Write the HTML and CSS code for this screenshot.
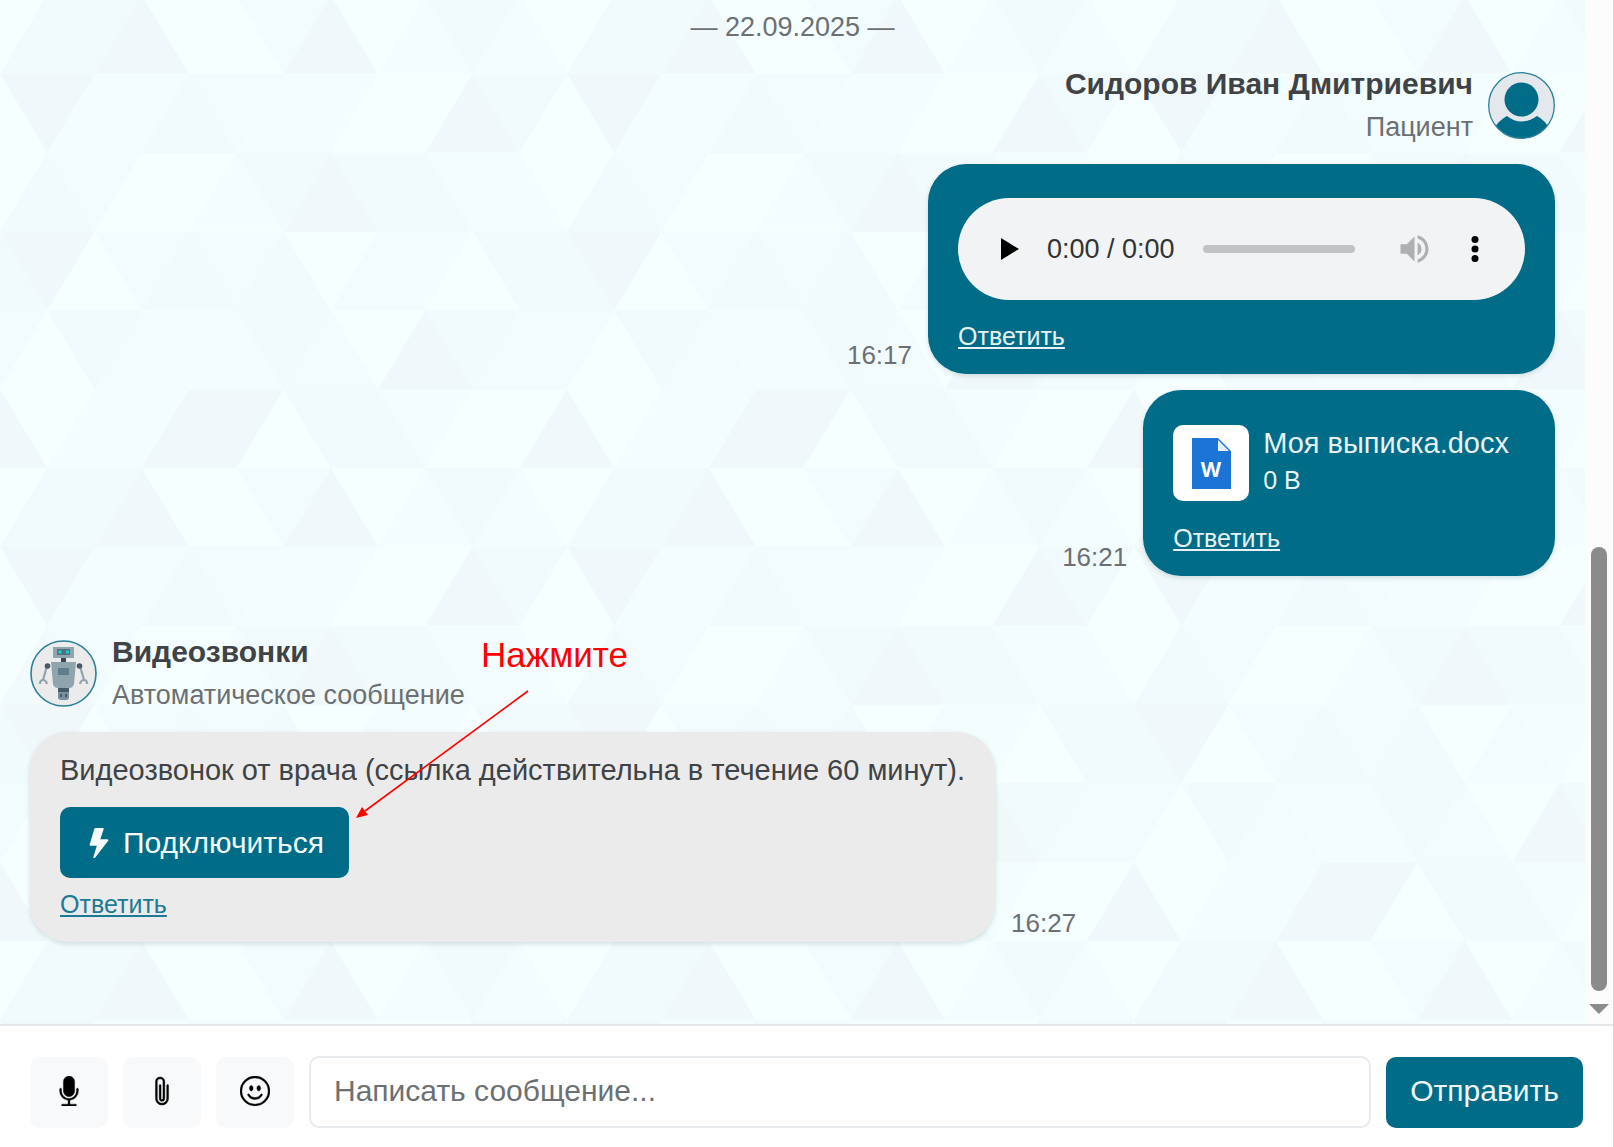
FILE: index.html
```html
<!DOCTYPE html>
<html lang="ru">
<head>
<meta charset="utf-8">
<meta name="viewport" content="width=device-width, initial-scale=1">
<title>Чат с врачом</title>
<link rel="stylesheet" href="styles.css">
</head>
<body>
<div class="app">
  <div class="viewport">
    <main class="chat">
      <svg class="chat-pattern" aria-hidden="true">
        <defs>
          <pattern id="triangles" patternUnits="userSpaceOnUse" y="-5" width="567" height="473" viewBox="0 0 12 6" preserveAspectRatio="none">
            <path class="shade-1" d="M8 1h2l-1-1zM10 1h2l-1-1zM1 2h2l-1-1zM2 1h2l-1 1zM5 2h2l-1-1zM6 1h2l-1 1zM4 3h2l-1-1zM9 2h2l-1 1zM10 3h2l-1-1zM8 3h2l-1 1zM3 4h2l-1 1zM4 5h2l-1-1zM1 6h2l-1-1zM2 5h2l-1 1zM8 5h2l-1 1z"/>
            <path class="shade-2" d="M5 0h2l-1 1zM4 1h2l-1 1zM1 2h2l-1 1zM2 3h2l-1 1zM4 3h2l-1 1zM7 4h2l-1-1zM2 5h2l-1-1zM6 5h2l-1-1zM10 5h2l-1-1zM11 4h2l-1 1zM-1 4h2l-1 1z"/>
            <path class="shade-3" d="M0 1h2l-1-1zM1 0h2l-1 1zM9 0h2l-1 1zM3 2h2l-1-1zM10 1h2l-1 1zM0 3h2l-1-1zM5 2h2l-1 1zM7 2h2l-1 1zM8 3h2l-1-1zM3 4h2l-1-1zM5 4h2l-1-1zM10 3h2l-1 1zM11 4h2l-1-1zM-1 4h2l-1-1zM1 4h2l-1 1zM5 4h2l-1 1zM9 4h2l-1 1zM6 5h2l-1 1zM7 6h2l-1-1z"/>
            <path class="shade-4" d="M2 1h2l-1-1zM6 1h2l-1-1zM0 1h2l-1 1zM9 2h2l-1-1zM6 3h2l-1-1zM0 3h2l-1 1zM8 5h2l-1-1zM3 6h2l-1-1zM4 5h2l-1 1zM11 6h2l-1-1zM-1 6h2l-1-1z"/>
          </pattern>
        </defs>
        <rect width="100%" height="100%" fill="url(#triangles)"/>
      </svg>

      <p class="date">— 22.09.2025 —</p>

      <section class="group group-own">
        <header class="author">
          <div class="author-text">
            <h2 class="author-name">Сидоров Иван Дмитриевич</h2>
            <p class="author-role">Пациент</p>
          </div>
          <svg class="avatar" viewBox="0 0 67 67" aria-hidden="true">
            <defs><clipPath id="avatar-clip"><circle cx="33.500" cy="33.500" r="33"/></clipPath></defs>
            <circle cx="33.500" cy="33.500" r="33" fill="#e4e7ec"/>
            <path clip-path="url(#avatar-clip)" d="M5 58Q11 48 19 44q14 11 30 0Q57 48 62 58L50 70H17z" fill="#006c88"/>
            <circle cx="33.500" cy="27.500" r="17" fill="#006c88"/>
            <circle cx="33.500" cy="33.500" r="32.800" fill="none" stroke="#2b8199" stroke-width="1.300"/>
          </svg>
        </header>

        <article class="message">
          <time class="time">16:17</time>
          <div class="bubble">
            <div class="player">
              <button class="player-button" type="button" aria-label="Воспроизвести">
                <svg class="icon-play" viewBox="0 0 18 22"><path d="M0 0v22l18-11z"/></svg>
              </button>
              <span class="player-time">0:00 / 0:00</span>
              <input class="player-seek" type="range" min="0" max="100" value="0" aria-label="Перемотка" disabled>
              <button class="player-button player-volume" type="button" aria-label="Звук" disabled>
                <svg class="icon-volume" viewBox="3 3 18 18"><path d="M3 9v6h4l5 5V4L7 9H3zm13.500 3A4.500 4.500 0 0 0 14 7.970v8.050A4.470 4.470 0 0 0 16.500 12zM14 3.230v2.060c2.890.860 5 3.540 5 6.710s-2.110 5.850-5 6.710v2.060c4.010-.910 7-4.490 7-8.770s-2.990-7.860-7-8.770z"/></svg>
              </button>
              <button class="player-button" type="button" aria-label="Ещё">
                <svg class="icon-more" viewBox="0 0 8 28"><circle cx="4" cy="4.500" r="3.500"/><circle cx="4" cy="14" r="3.500"/><circle cx="4" cy="23.500" r="3.500"/></svg>
              </button>
            </div>
            <a class="reply" href="#">Ответить</a>
          </div>
        </article>

        <article class="message">
          <time class="time">16:21</time>
          <div class="bubble">
            <div class="file">
              <span class="file-icon">
                <svg viewBox="0 0 39 51" aria-hidden="true">
                  <path d="M0 0h26l13 13v38H0z" fill="#1b74d6"/>
                  <path d="M26 2v11h11z" fill="#e4f0fb"/>
                  <text x="19" y="39" text-anchor="middle" class="file-letter">W</text>
                </svg>
              </span>
              <div class="file-text">
                <p class="file-name">Моя выписка.docx</p>
                <p class="file-size">0 B</p>
              </div>
            </div>
            <a class="reply" href="#">Ответить</a>
          </div>
        </article>
      </section>

      <section class="group group-bot">
        <header class="author">
          <svg class="avatar" viewBox="0 0 67 67" aria-hidden="true">
            <circle cx="33.500" cy="33.500" r="32.500" fill="#ebebeb" stroke="#2b8199" stroke-width="1.600"/>
            <path d="M31 17h5v5h-5z" fill="#37474f"/>
            <rect x="23" y="7" width="21" height="11" fill="#90a4ae"/>
            <rect x="27" y="9" width="13" height="6" fill="#546e7a"/>
            <circle cx="30" cy="12" r="1.800" fill="#18d3d3"/><circle cx="37.500" cy="12" r="1.800" fill="#18d3d3"/>
            <path d="M17 26 13 40M50 26l4 14M10 44q0-4 3-4 3 0 4 4M50 44q1-4 4-4 3 0 3 4" fill="none" stroke="#90a4ae" stroke-width="2.200"/>
            <path d="M21 22h25l-2 22q-1 4-5 4H28q-4 0-5-4z" fill="#90a4ae"/>
            <rect x="28" y="28" width="11" height="7" fill="#607d8b"/>
            <circle cx="17.500" cy="26" r="2.800" fill="#455a64"/><circle cx="49.500" cy="26" r="2.800" fill="#455a64"/>
            <path d="M28 48h11v9q0 3-3 3h-5q-3 0-3-3z" fill="#78909c"/>
            <path d="M28 48h11v4H28z" fill="#455a64"/><path d="M30 54h2v3h-2zm5 0h2v3h-2z" fill="#455a64"/>
          </svg>
          <div class="author-text">
            <h2 class="author-name">Видеозвонки</h2>
            <p class="author-role">Автоматическое сообщение</p>
          </div>
        </header>

        <article class="message">
          <div class="bubble bubble-bot">
            <p class="bubble-text">Видеозвонок от врача (ссылка действительна в течение 60 минут).</p>
            <button class="connect" type="button">
              <svg class="icon" viewBox="0 0 16 16" aria-hidden="true"><path d="M5.520.359A.5.500 0 0 1 6 0h4a.5.500 0 0 1 .474.658L8.694 6H12.500a.5.500 0 0 1 .395.807l-7 9a.5.500 0 0 1-.873-.454L6.823 9.500H3.500a.5.500 0 0 1-.480-.641z"/></svg>
              Подключиться
            </button>
            <a class="reply" href="#">Ответить</a>
          </div>
          <time class="time">16:27</time>
        </article>

        <div class="hint">
          <p class="hint-text">Нажмите</p>
          <svg class="hint-arrow" viewBox="0 0 174 130" aria-hidden="true">
            <path d="M173 1 10 121" stroke="#f00" stroke-width="1.600"/>
            <path d="M1 128 7 117l6 8z" fill="#f00"/>
          </svg>
        </div>
      </section>
    </main>

    <div class="scrollbar" aria-hidden="true">
      <div class="scrollbar-thumb"></div>
      <div class="scrollbar-arrow"></div>
    </div>
  </div>

  <form class="composer">
    <button class="tool" type="button" aria-label="Голосовое сообщение">
      <svg class="icon" viewBox="0 0 16 16"><path d="M5 3a3 3 0 0 1 6 0v5a3 3 0 0 1-6 0z"/><path d="M3.500 6.500A.5.500 0 0 1 4 7v1a4 4 0 0 0 8 0V7a.5.500 0 0 1 1 0v1a5 5 0 0 1-4.500 4.975V15h3a.5.500 0 0 1 0 1h-7a.5.500 0 0 1 0-1h3v-2.025A5 5 0 0 1 3 8V7a.5.500 0 0 1 .5-.5"/></svg>
    </button>
    <button class="tool" type="button" aria-label="Прикрепить файл">
      <svg class="icon" viewBox="0 0 16 16"><path d="M4.500 3a2.500 2.500 0 0 1 5 0v9a1.500 1.500 0 0 1-3 0V5a.5.500 0 0 1 1 0v7a.5.500 0 0 0 1 0V3a1.500 1.500 0 1 0-3 0v9a2.500 2.500 0 0 0 5 0V5a.5.500 0 0 1 1 0v7a3.500 3.500 0 1 1-7 0z"/></svg>
    </button>
    <button class="tool" type="button" aria-label="Эмодзи">
      <svg class="icon" viewBox="0 0 16 16"><path d="M8 15A7 7 0 1 1 8 1a7 7 0 0 1 0 14m0 1A8 8 0 1 0 8 0a8 8 0 0 0 0 16"/><path d="M4.285 9.567a.5.500 0 0 1 .683.183A3.500 3.500 0 0 0 8 11.500a3.500 3.500 0 0 0 3.032-1.750.5.500 0 1 1 .866.500A4.500 4.500 0 0 1 8 12.500a4.500 4.500 0 0 1-3.898-2.250.5.500 0 0 1 .183-.683M7 6.500C7 7.328 6.552 8 6 8s-1-.672-1-1.500S5.448 5 6 5s1 .672 1 1.500m4 0c0 .828-.448 1.500-1 1.500s-1-.672-1-1.500S9.448 5 10 5s1 .672 1 1.500"/></svg>
    </button>
    <input class="field" type="text" placeholder="Написать сообщение..." aria-label="Написать сообщение">
    <button class="send" type="submit">Отправить</button>
  </form>
</div>
</body>
</html>
```
FILE: styles.css
```css
* {
  box-sizing: border-box;
}

body {
  margin: 0;
  color: #3f4346;
  font-family: "Liberation Sans", Arial, sans-serif;
  font-size: 30px;
}

h2,
p {
  margin: 0;
}

button,
input {
  margin: 0;
  border: 0;
  padding: 0;
  font: inherit;
}

svg {
  display: block;
}

.app {
  display: flex;
  flex-direction: column;
  min-height: 100vh;
  border-right: 1px solid #d3d5d7;
}

.viewport {
  flex: 1;
  display: flex;
}

/* Chat feed */

.chat {
  position: relative;
  flex: 1;
  display: flex;
  flex-direction: column;
  padding: 7px 30px 80px;
  background: #f5ffff;
}

.chat > * {
  position: relative;
}

.chat > .chat-pattern {
  position: absolute;
  inset: 0;
  width: 100%;
  height: 100%;
}

.shade-1 { fill: #f4fdfe; }
.shade-2 { fill: #f2fcfd; }
.shade-3 { fill: #f1fafc; }
.shade-4 { fill: #f0f8fa; }

.date {
  margin-bottom: 15px;
  color: #6c7073;
  font-size: 27px;
  line-height: 40px;
  text-align: center;
}

.group {
  display: flex;
  flex-direction: column;
  gap: 16px;
}

.group-own {
  align-items: flex-end;
}

.group-bot {
  align-items: flex-start;
  margin-top: 54px;
}

.author {
  display: flex;
  align-items: center;
  gap: 15px;
}

.group-own .author {
  text-align: right;
}

.avatar {
  width: 67px;
  height: 67px;
}

.author-name {
  font-size: 30px;
  line-height: 44px;
}

.author-role {
  color: #6c7073;
  font-size: 27px;
  line-height: 42px;
}

.message {
  display: flex;
  align-items: flex-end;
  gap: 16px;
}

.time {
  color: #6c7073;
  font-size: 26px;
  line-height: 38px;
}

.bubble {
  padding: 34px 30px 20px;
  border-radius: 38px;
  background: #006c88;
  color: #e8f2f5;
  box-shadow: 0 2px 5px rgba(0, 40, 50, 0.14);
}

.bubble-bot {
  padding-top: 16px;
  background: #ebebeb;
  color: #3f4346;
}

.bubble-text {
  font-size: 29px;
  line-height: 44px;
}

.reply {
  display: block;
  width: fit-content;
  margin-top: 18px;
  color: inherit;
  font-size: 25px;
  line-height: 36px;
  text-decoration-thickness: 2px;
  text-underline-offset: 2px;
}

.bubble-bot .reply {
  margin-top: 8px;
  color: #1b7a94;
}

/* Audio player */

.player {
  display: flex;
  align-items: center;
  width: 567px;
  height: 102px;
  padding: 0 46px 0 43px;
  border-radius: 51px;
  background: #f1f3f4;
  color: #333;
}

.player-button {
  background: none;
  color: #000;
}

.player-button svg {
  fill: currentColor;
}

.icon-play {
  width: 18px;
  height: 22px;
}

.player-time {
  margin-left: 28px;
  font-size: 27px;
  white-space: nowrap;
}

.player-seek {
  flex: 1;
  min-width: 0;
  height: 8px;
  margin: 0 45px 0 28px;
  border-radius: 4px;
  background: #c1c2c4;
  appearance: none;
}

.player-seek::-webkit-slider-thumb {
  width: 0;
  height: 0;
  appearance: none;
}

.player-volume {
  margin-right: 42px;
  color: #aeb0b1;
}

.icon-volume {
  width: 29px;
  height: 28px;
}

.icon-more {
  width: 8px;
  height: 28px;
}

/* Attached file */

.file {
  display: flex;
  align-items: center;
  gap: 14px;
  padding-right: 16px;
}

.file-icon {
  display: grid;
  place-items: center;
  width: 76px;
  height: 76px;
  border-radius: 10px;
  background: #fff;
}

.file-icon svg {
  width: 39px;
  height: 51px;
}

.file-letter {
  fill: #fff;
  font-family: "Open Sans", "Noto Sans", sans-serif;
  font-size: 21px;
  font-weight: 700;
}

.file-text {
  padding-bottom: 4px;
}

.file-name {
  font-size: 29px;
  line-height: 38px;
}

.file-size {
  font-size: 25px;
  line-height: 36px;
}

.connect {
  display: flex;
  align-items: center;
  gap: 9px;
  height: 71px;
  margin-top: 15px;
  padding: 0 25px 0 24px;
  border-radius: 10px;
  background: #006c88;
  color: #f4f9fa;
}

.icon {
  width: 30px;
  height: 30px;
  fill: currentColor;
}

/* Callout drawn over the bot message */

.hint {
  position: absolute;
  top: 3px;
  left: 325px;
}

.hint-text {
  padding-left: 126px;
  color: #f00;
  font-size: 35px;
  line-height: 44px;
}

.hint-arrow {
  width: 174px;
  height: 130px;
  margin-top: 13px;
}

/* Scrollbar */

.scrollbar {
  display: flex;
  flex-direction: column;
  align-items: center;
  justify-content: flex-end;
  gap: 13px;
  width: 28px;
  padding-bottom: 10px;
  background: #fcfcfc;
}

.scrollbar-thumb {
  width: 16px;
  height: 444px;
  border-radius: 8px;
  background: #8b8b8b;
}

.scrollbar-arrow {
  width: 20px;
  height: 10px;
  background: #8b8b8b;
  clip-path: polygon(0 0, 100% 0, 50% 100%);
}

/* Composer */

.composer {
  display: flex;
  align-items: center;
  gap: 15px;
  padding: 30px 30px 19px;
  border-top: 2px solid #e4e8eb;
  background: #fff;
}

.tool {
  display: grid;
  place-items: center;
  width: 78px;
  height: 71px;
  padding-bottom: 2px;
  border-radius: 10px;
  background: #f8f9fa;
  color: #000;
}

.tool .icon {
  stroke: currentColor;
  stroke-width: 0.2;
}

.field {
  flex: 1;
  min-width: 0;
  height: 72px;
  padding: 0 23px 2px;
  border: 2px solid #e9ecef;
  border-radius: 10px;
  background: #fff;
}

.field::placeholder {
  color: #6c7073;
  opacity: 1;
}

.send {
  height: 71px;
  padding: 0 24px 2px;
  border-radius: 10px;
  background: #006c88;
  color: #f0f6f8;
}
```
